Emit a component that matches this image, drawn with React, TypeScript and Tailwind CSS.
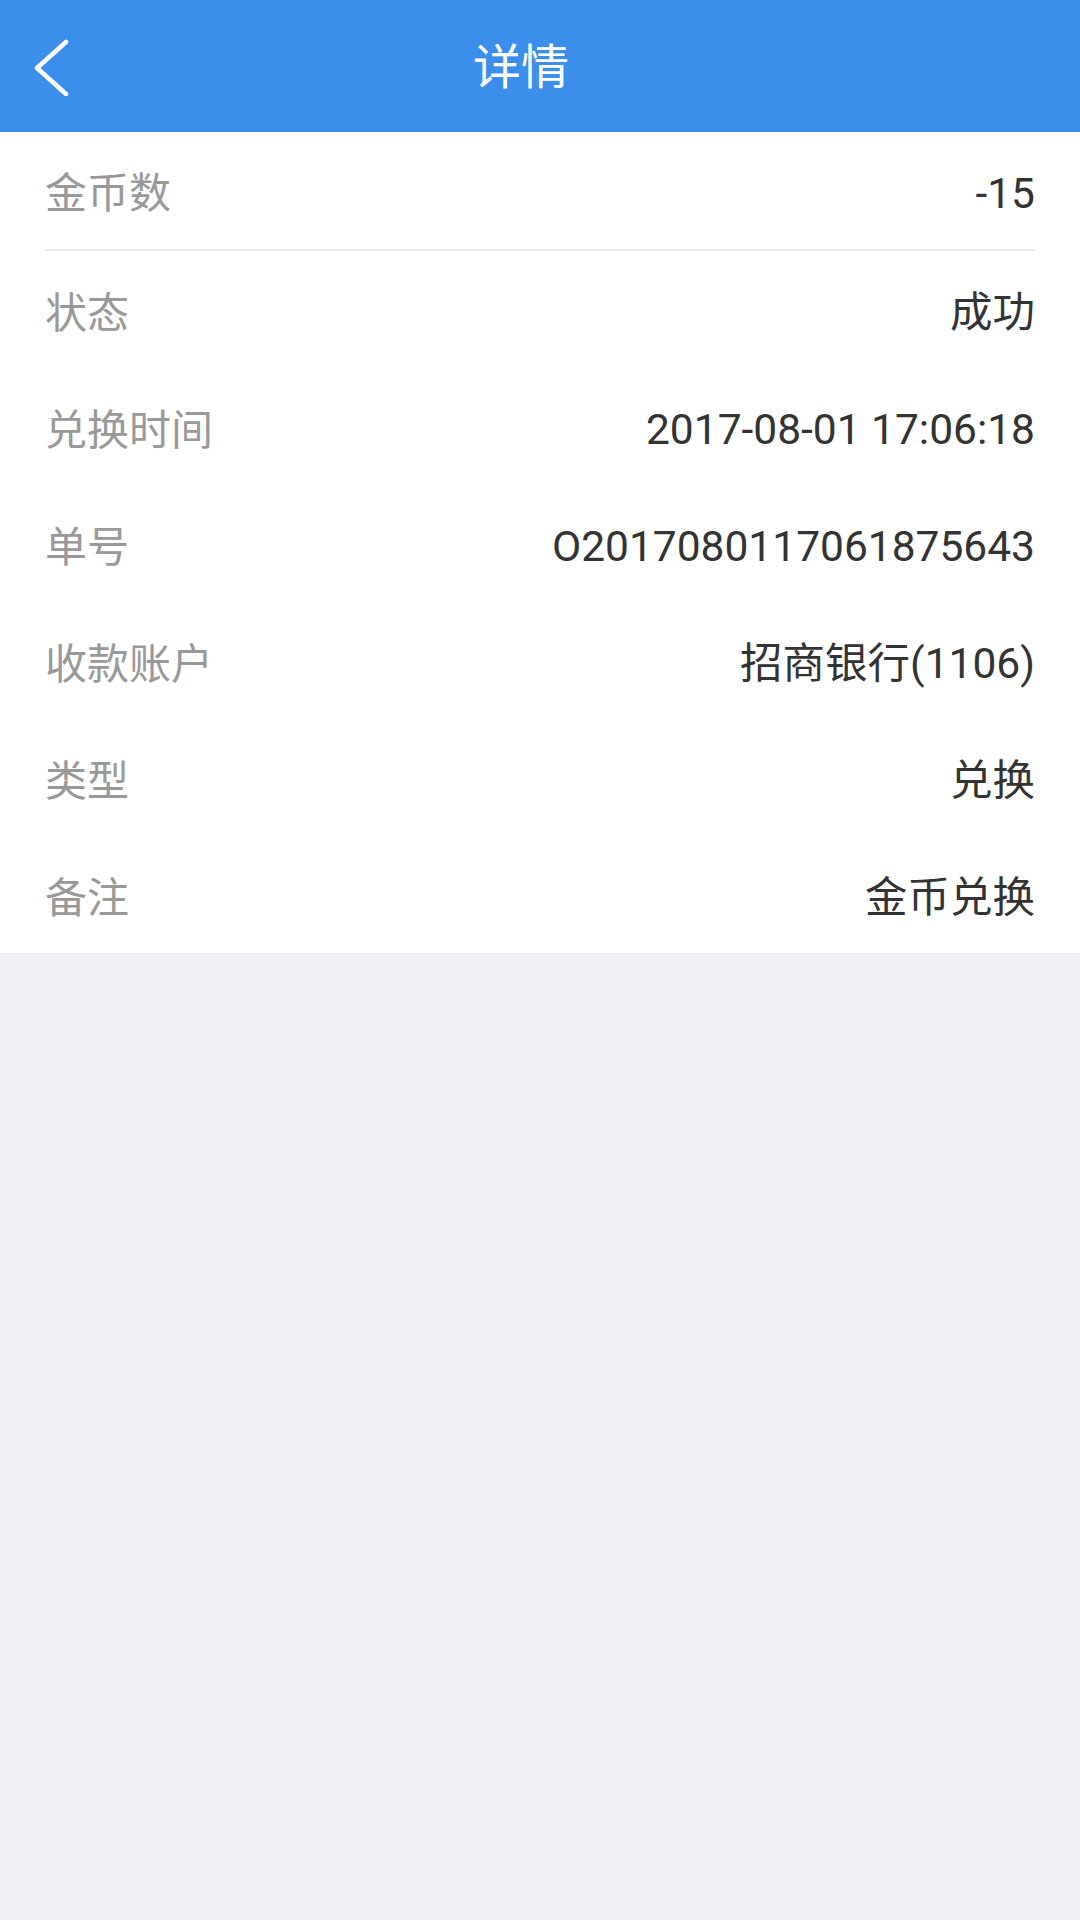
const rows: { label: string; value: string }[] = [
  { label: "状态", value: "成功" },
  { label: "兑换时间", value: "2017-08-01 17:06:18" },
  { label: "单号", value: "O2017080117061875643" },
  { label: "收款账户", value: "招商银行(1106)" },
  { label: "类型", value: "兑换" },
  { label: "备注", value: "金币兑换" },
];

function Row({ label, value }: { label: string; value: string }) {
  return (
    <div className="flex h-[117px] items-center justify-between px-[45px] pt-[7px]">
      <span className="text-[42px] text-[#999999]">{label}</span>
      <span className="text-[42.5px] text-[#333333]">{value}</span>
    </div>
  );
}

export default function App() {
  return (
    <div
      className="flex min-h-[1920px] w-[1080px] flex-col bg-[#efeff4]"
      style={{ fontFamily: 'Roboto, "Noto Sans CJK SC", sans-serif' }}
    >
      <header className="flex h-[132px] items-center bg-[#3b8eea]">
        <div className="flex w-[120px] items-center pl-[33px]">
          <svg width="40" height="60" viewBox="0 0 40 60" fill="none">
            <path
              d="M33 6 L4 32 L33 58"
              stroke="white"
              strokeWidth="4.5"
              strokeLinecap="round"
              strokeLinejoin="round"
            />
          </svg>
        </div>
        <h1 className="flex-1 pt-[4px] text-center text-[48px] leading-none text-white">详情</h1>
        <div className="w-[158px]" />
      </header>

      <div className="bg-white">
        <div className="px-[45px]">
          <div className="flex h-[119px] items-center justify-between border-b-2 border-[#ebe8e8] pt-[6px]">
            <span className="text-[42px] text-[#999999]">金币数</span>
            <span className="text-[42.5px] text-[#333333]">-15</span>
          </div>
        </div>
        {rows.map((r) => (
          <Row key={r.label} label={r.label} value={r.value} />
        ))}
      </div>
    </div>
  );
}
